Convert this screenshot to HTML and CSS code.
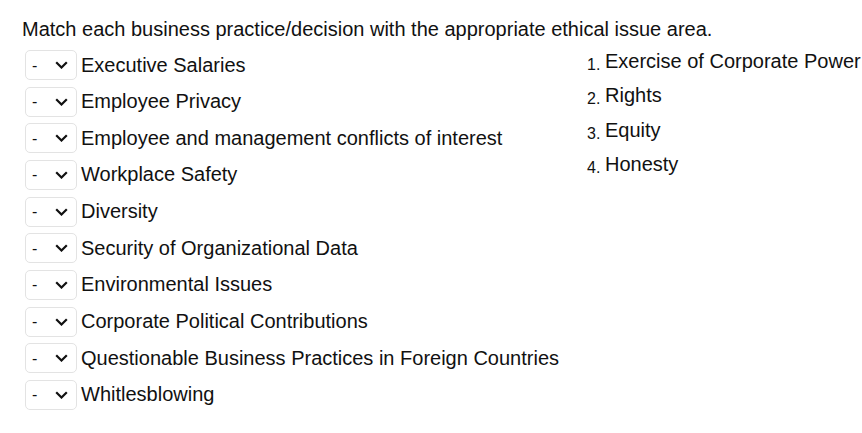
FILE: index.html
```html
<!DOCTYPE html>
<html>
<head>
<meta charset="utf-8">
<link rel="stylesheet" href="styles.css">
</head>
<body>
<div class="page">
  <p class="prompt">Match each business practice/decision with the appropriate ethical issue area.</p>
  <div class="columns">
    <div class="items">
      <div class="row"><span class="pick"><select><option>-</option></select><svg class="chev" width="13" height="8" viewBox="0 0 13 8"><path d="M1.2 1.2l5.3 5.3 5.3-5.3" fill="none" stroke="#111" stroke-width="2.2"/></svg></span><span class="label">Executive Salaries</span></div>
      <div class="row"><span class="pick"><select><option>-</option></select><svg class="chev" width="13" height="8" viewBox="0 0 13 8"><path d="M1.2 1.2l5.3 5.3 5.3-5.3" fill="none" stroke="#111" stroke-width="2.2"/></svg></span><span class="label">Employee Privacy</span></div>
      <div class="row"><span class="pick"><select><option>-</option></select><svg class="chev" width="13" height="8" viewBox="0 0 13 8"><path d="M1.2 1.2l5.3 5.3 5.3-5.3" fill="none" stroke="#111" stroke-width="2.2"/></svg></span><span class="label">Employee and management conflicts of interest</span></div>
      <div class="row"><span class="pick"><select><option>-</option></select><svg class="chev" width="13" height="8" viewBox="0 0 13 8"><path d="M1.2 1.2l5.3 5.3 5.3-5.3" fill="none" stroke="#111" stroke-width="2.2"/></svg></span><span class="label">Workplace Safety</span></div>
      <div class="row"><span class="pick"><select><option>-</option></select><svg class="chev" width="13" height="8" viewBox="0 0 13 8"><path d="M1.2 1.2l5.3 5.3 5.3-5.3" fill="none" stroke="#111" stroke-width="2.2"/></svg></span><span class="label">Diversity</span></div>
      <div class="row"><span class="pick"><select><option>-</option></select><svg class="chev" width="13" height="8" viewBox="0 0 13 8"><path d="M1.2 1.2l5.3 5.3 5.3-5.3" fill="none" stroke="#111" stroke-width="2.2"/></svg></span><span class="label">Security of Organizational Data</span></div>
      <div class="row"><span class="pick"><select><option>-</option></select><svg class="chev" width="13" height="8" viewBox="0 0 13 8"><path d="M1.2 1.2l5.3 5.3 5.3-5.3" fill="none" stroke="#111" stroke-width="2.2"/></svg></span><span class="label">Environmental Issues</span></div>
      <div class="row"><span class="pick"><select><option>-</option></select><svg class="chev" width="13" height="8" viewBox="0 0 13 8"><path d="M1.2 1.2l5.3 5.3 5.3-5.3" fill="none" stroke="#111" stroke-width="2.2"/></svg></span><span class="label">Corporate Political Contributions</span></div>
      <div class="row"><span class="pick"><select><option>-</option></select><svg class="chev" width="13" height="8" viewBox="0 0 13 8"><path d="M1.2 1.2l5.3 5.3 5.3-5.3" fill="none" stroke="#111" stroke-width="2.2"/></svg></span><span class="label">Questionable Business Practices in Foreign Countries</span></div>
      <div class="row"><span class="pick"><select><option>-</option></select><svg class="chev" width="13" height="8" viewBox="0 0 13 8"><path d="M1.2 1.2l5.3 5.3 5.3-5.3" fill="none" stroke="#111" stroke-width="2.2"/></svg></span><span class="label">Whitlesblowing</span></div>
    </div>
    <ol class="answers">
      <li><span class="num">1.</span><span class="ans">Exercise of Corporate Power</span></li>
      <li><span class="num">2.</span><span class="ans">Rights</span></li>
      <li><span class="num">3.</span><span class="ans">Equity</span></li>
      <li><span class="num">4.</span><span class="ans">Honesty</span></li>
    </ol>
  </div>
</div>
</body>
</html>
```
FILE: styles.css
```css
html, body {
  margin: 0;
  padding: 0;
  background: #fff;
}
body {
  font-family: "Liberation Sans", Arial, sans-serif;
  font-size: 20px;
  color: #111;
}
.page {
  padding: 18px 0 0 22px;
}
.prompt {
  margin: 0;
  line-height: 23px;
  white-space: nowrap;
}
.columns {
  display: flex;
  align-items: flex-start;
  margin-top: 9px;
}
.items {
  display: flex;
  flex-direction: column;
  gap: 6.67px;
  width: 562px;
  padding-left: 3px;
  flex: none;
}
.row {
  display: flex;
  align-items: center;
  gap: 4px;
  height: 30px;
}
.pick {
  position: relative;
  display: block;
  width: 52px;
  height: 30px;
  flex: none;
}
.pick select {
  appearance: none;
  -webkit-appearance: none;
  width: 52px;
  height: 30px;
  box-sizing: border-box;
  border: 1px solid #e3e3e3;
  border-radius: 5px;
  background: #fff;
  font-family: "Liberation Sans", Arial, sans-serif;
  font-size: 16px;
  color: #111;
  padding: 0 0 0 6px;
  margin: 0;
}
.chev {
  position: absolute;
  left: 30px;
  top: 11px;
}
.label {
  white-space: nowrap;
  line-height: 23px;
}
.answers {
  list-style: none;
  margin: 0;
  padding: 0;
}
.answers li {
  display: flex;
  align-items: flex-start;
  height: 23px;
  margin-bottom: 11.4px;
  white-space: nowrap;
}
.num {
  font-size: 16px;
  line-height: 18px;
  margin-top: 6px;
  width: 18px;
  flex: none;
}
.ans {
  line-height: 23px;
}
```
